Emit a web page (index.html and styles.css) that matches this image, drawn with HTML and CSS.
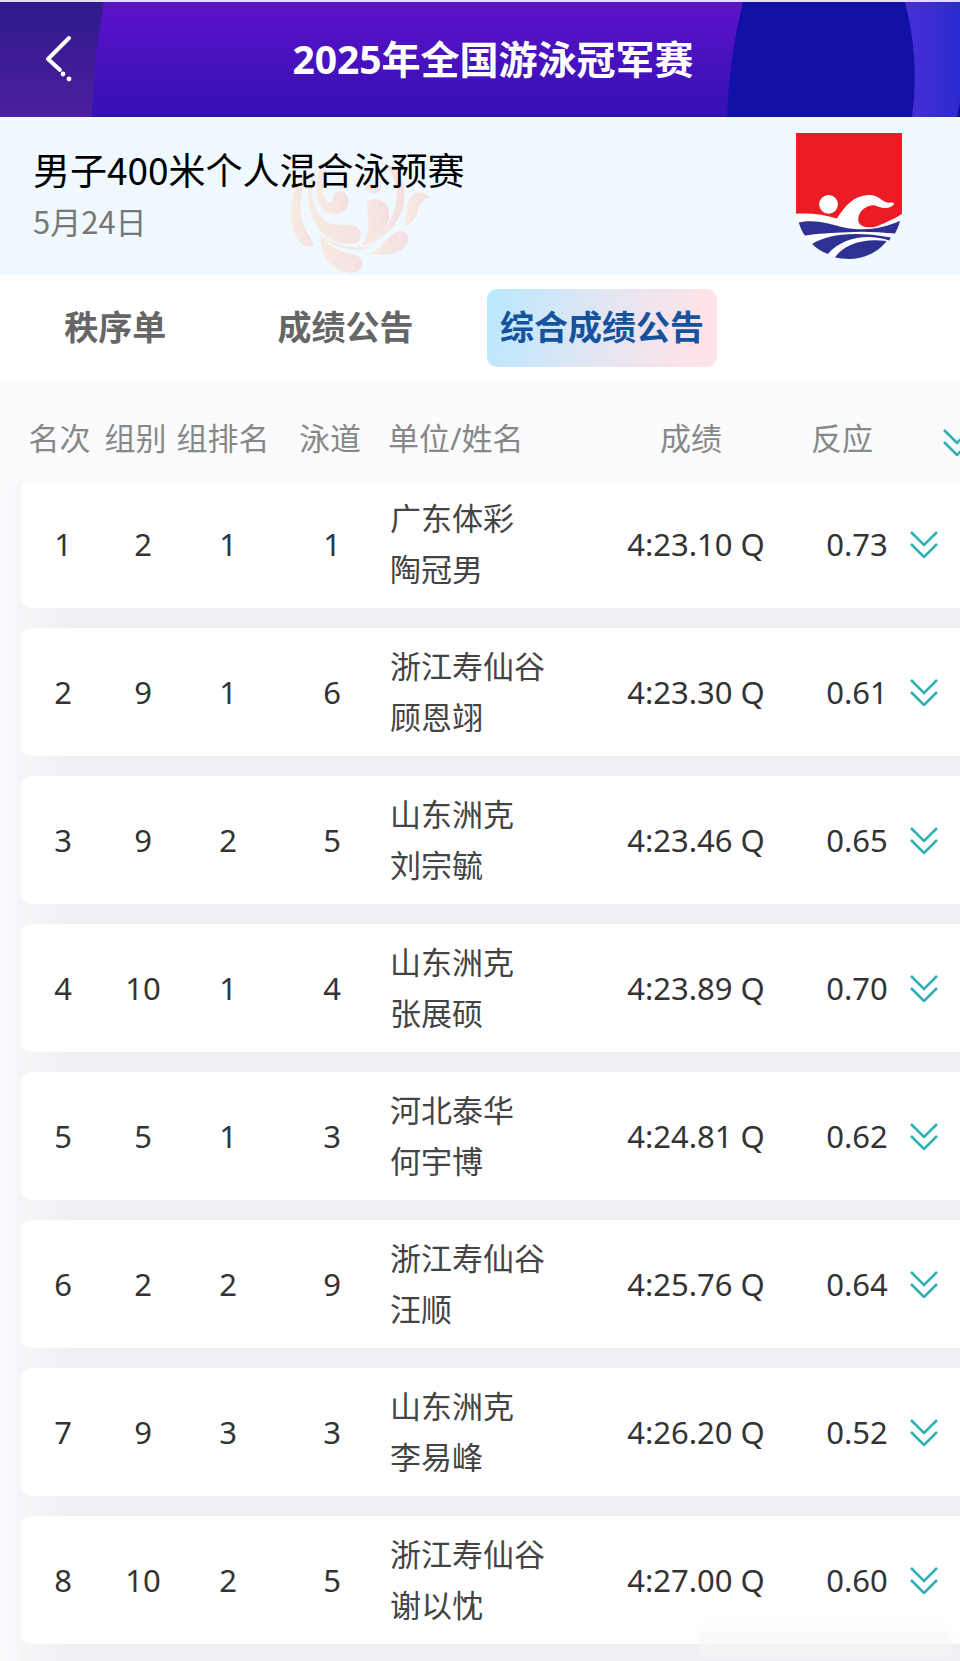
FILE: index.html
```html
<!DOCTYPE html>
<html lang="zh-CN">
<head>
  <meta charset="UTF-8">
  <meta name="viewport" content="width=device-width, initial-scale=1.0">
  <title>2025年全国游泳冠军赛</title>
  <link rel="stylesheet" href="styles.css">
</head>
<body>
<!-- 公用图标 -->
<svg class="sprite" aria-hidden="true">
  <symbol id="down" viewBox="0 0 28 28">
    <path d="M1 2l13 13L27 2M1 14l13 13 13-13" fill="none" stroke="#2fb0b5" stroke-width="2.6"/>
  </symbol>
</svg>

<header class="head">
  <svg class="headBg" viewBox="0 0 960 117" preserveAspectRatio="none" aria-hidden="true">
    <defs>
      <linearGradient id="main" x1="0" y1="0" x2="0" y2="1">
        <stop offset="0" stop-color="#5c12c8"/>
        <stop offset="1" stop-color="#3411b4"/>
      </linearGradient>
      <linearGradient id="left" x1="0" y1="0" x2="0" y2="1">
        <stop offset="0" stop-color="#2e1a8c"/>
        <stop offset="1" stop-color="#4c1ea0"/>
      </linearGradient>
      <linearGradient id="right" x1="0" y1="0" x2="1" y2="0">
        <stop offset="0" stop-color="#4a2fd6"/>
        <stop offset="1" stop-color="#2b2bd0"/>
      </linearGradient>
    </defs>
    <rect width="960" height="117" fill="url(#main)"/>
    <path d="M0 0H104Q93 58 92 117H0z" fill="url(#left)"/>
    <path d="M900 0H960V117H900z" fill="url(#right)"/>
    <path d="M743 0H905Q920 58 912 117H727Q729 58 743 0z" fill="#1111a8"/>
    <path d="M960 102V117H957z" fill="#10107a"/>
  </svg>
  <button class="back" type="button" aria-label="返回">
    <svg viewBox="0 0 28 48" aria-hidden="true">
      <path d="M24 3L3 24l12 11" fill="none" stroke="#fff" stroke-width="4" stroke-linecap="round" stroke-linejoin="round"/>
      <circle cx="18" cy="39" r="2.4" fill="#fff"/>
      <circle cx="24" cy="44" r="2.4" fill="#fff"/>
    </svg>
  </button>
  <h1>2025年全国游泳冠军赛</h1>
</header>

<section class="info">
  <svg class="flower" viewBox="50 40 440 365" aria-hidden="true">
    <defs>
      <linearGradient id="petal" x1="0" y1="0.600" x2="1" y2="0.400">
        <stop offset="0" stop-color="#f8ece2"/>
        <stop offset="1" stop-color="#f4dfe0"/>
      </linearGradient>
    </defs>
    <g fill="url(#petal)">
      <path d="M112 100C70 130 54 190 64 250C72 296 96 326 128 320C132 296 104 282 94 236C86 190 92 140 112 100z"/>
      <path d="M150 74C104 116 104 190 134 248C160 300 214 322 262 308C278 290 272 262 246 256C206 252 172 264 146 222C116 174 116 118 150 74z"/>
      <path d="M152 84C134 120 132 172 152 204C170 228 214 228 230 204C242 180 228 156 208 154C184 154 196 182 178 188C156 186 150 130 168 92z"/>
      <path d="M294 182C326 168 358 190 356 226C354 270 312 306 272 322C292 286 296 260 292 228C290 208 284 192 294 182z"/>
      <path d="M284 140C296 128 326 128 334 142C330 160 300 172 284 150z"/>
      <path d="M334 70C386 76 408 124 400 184C394 242 350 292 288 318C344 280 374 232 378 172C380 126 364 92 334 70z"/>
      <path d="M414 184C422 156 450 146 480 174C456 172 446 194 440 218C432 244 414 256 396 262C410 236 406 210 414 184z"/>
      <path d="M372 280C398 264 420 282 412 306C400 340 350 352 292 340C328 334 342 296 372 280z"/>
      <path d="M150 284C174 326 214 334 250 344C280 352 284 376 264 394C230 410 176 384 158 340C152 320 152 302 150 284z"/>
      <path d="M160 298C204 330 262 336 312 318C264 328 206 322 160 290z"/>
    </g>
  </svg>
  <div class="event">
    <h2>男子400米个人混合泳预赛</h2>
    <p>5月24日</p>
  </div>
  <svg class="logo" viewBox="50 40 316 376" role="img" aria-label="游泳协会">
    <path d="M50 280V40H366V284C350 350 280 416 208 416C140 416 64 360 50 280z" fill="#fff"/>
    <path d="M50 40H366V282C350 292 324 306 292 318C266 326 240 320 236 304C232 276 258 254 286 256C304 264 330 270 343 252C340 246 334 248 326 248C306 246 296 224 266 225C220 228 196 258 172 295C136 284 96 278 50 281z" fill="#ed1c24"/>
    <circle cx="147" cy="253" r="28" fill="#fff"/>
    <g fill="#2e3192">
      <path d="M58 307C108 296 150 312 190 321C250 334 310 326 360 302C356 320 350 332 345 340C300 336 250 332 204 336C156 338 112 340 76 346C68 334 62 320 58 307z"/>
      <path d="M98 371C140 344 220 330 333 352L328 361C270 340 190 348 145 401C126 394 110 384 98 371z"/>
      <path d="M166 411C190 376 244 352 320 362C296 396 250 416 208 416C192 416 178 414 166 411z"/>
    </g>
  </svg>
</section>

<nav class="tabs">
  <button type="button">秩序单</button>
  <button type="button">成绩公告</button>
  <button type="button" class="active" aria-current="page">综合成绩公告</button>
</nav>

<table class="list">
  <thead>
    <tr>
      <th>名次</th>
      <th>组别</th>
      <th>组排名</th>
      <th>泳道</th>
      <th class="name">单位/姓名</th>
      <th>成绩</th>
      <th>反应</th>
      <th class="more"><button type="button" aria-label="全部展开"><svg><use href="#down"/></svg></button></th>
    </tr>
  </thead>
  <tbody>
    <tr>
      <td>1</td>
      <td>2</td>
      <td>1</td>
      <td>1</td>
      <td class="name">广东体彩<br>陶冠男</td>
      <td>4:23.10 Q</td>
      <td>0.73</td>
      <td class="more"><button type="button" aria-label="展开"><svg><use href="#down"/></svg></button></td>
    </tr>
    <tr>
      <td>2</td>
      <td>9</td>
      <td>1</td>
      <td>6</td>
      <td class="name">浙江寿仙谷<br>顾恩翊</td>
      <td>4:23.30 Q</td>
      <td>0.61</td>
      <td class="more"><button type="button" aria-label="展开"><svg><use href="#down"/></svg></button></td>
    </tr>
    <tr>
      <td>3</td>
      <td>9</td>
      <td>2</td>
      <td>5</td>
      <td class="name">山东洲克<br>刘宗毓</td>
      <td>4:23.46 Q</td>
      <td>0.65</td>
      <td class="more"><button type="button" aria-label="展开"><svg><use href="#down"/></svg></button></td>
    </tr>
    <tr>
      <td>4</td>
      <td>10</td>
      <td>1</td>
      <td>4</td>
      <td class="name">山东洲克<br>张展硕</td>
      <td>4:23.89 Q</td>
      <td>0.70</td>
      <td class="more"><button type="button" aria-label="展开"><svg><use href="#down"/></svg></button></td>
    </tr>
    <tr>
      <td>5</td>
      <td>5</td>
      <td>1</td>
      <td>3</td>
      <td class="name">河北泰华<br>何宇博</td>
      <td>4:24.81 Q</td>
      <td>0.62</td>
      <td class="more"><button type="button" aria-label="展开"><svg><use href="#down"/></svg></button></td>
    </tr>
    <tr>
      <td>6</td>
      <td>2</td>
      <td>2</td>
      <td>9</td>
      <td class="name">浙江寿仙谷<br>汪顺</td>
      <td>4:25.76 Q</td>
      <td>0.64</td>
      <td class="more"><button type="button" aria-label="展开"><svg><use href="#down"/></svg></button></td>
    </tr>
    <tr>
      <td>7</td>
      <td>9</td>
      <td>3</td>
      <td>3</td>
      <td class="name">山东洲克<br>李易峰</td>
      <td>4:26.20 Q</td>
      <td>0.52</td>
      <td class="more"><button type="button" aria-label="展开"><svg><use href="#down"/></svg></button></td>
    </tr>
    <tr>
      <td>8</td>
      <td>10</td>
      <td>2</td>
      <td>5</td>
      <td class="name">浙江寿仙谷<br>谢以忱</td>
      <td>4:27.00 Q</td>
      <td>0.60</td>
      <td class="more"><button type="button" aria-label="展开"><svg><use href="#down"/></svg></button></td>
    </tr>
  </tbody>
</table>
<div class="fade"></div>
</body>
</html>
```
FILE: styles.css
```css
*{
  margin: 0;
  padding: 0;
  box-sizing: border-box;
}
body{
  position: relative;
  overflow-x: hidden;
  background-color: #fafbfd;
  font-family: "Noto Sans", "Noto Sans CJK SC", sans-serif;
  font-size: 31px;
}
button{
  border: 0;
  background: none;
  font: inherit;
  color: inherit;
  cursor: pointer;
}
svg{
  display: block;
}
.sprite{
  position: absolute;
  width: 0;
  height: 0;
}
/*顶部标题*/
.head{
  position: relative;
  display: grid;
  grid-template-columns: 106px 1fr 80px;
  align-items: center;
  height: 117px;
  padding-bottom: 2px;
  border-top: 2px solid #e4dcf0;
  color: #fff;
}
.headBg{
  position: absolute;
  width: 100%;
  height: 100%;
}
.back{
  position: relative;
  justify-self: center;
  padding: 0 0 0 12px;
}
.back svg{
  width: 28px;
  height: 48px;
}
.head h1{
  position: relative;
  font-size: 39px;
  line-height: 60px;
  text-align: center;
}
/*比赛信息*/
.info{
  position: relative;
  display: flex;
  justify-content: space-between;
  align-items: flex-start;
  height: 158px;
  padding: 16px 58px 0 33px;
  background-color: #f0f9ff;
}
.flower{
  position: absolute;
  left: 287px;
  top: 36px;
  width: 147px;
  height: 122px;
}
.event{
  position: relative;
  padding-top: 8px;
  font-family: "Noto Sans CJK SC", sans-serif;
}
.event h2{
  font-size: 37px;
  font-weight: 400;
  line-height: 56px;
  color: #000;
}
.event p{
  font-size: 31px;
  line-height: 48px;
  color: #777;
}
.logo{
  width: 106px;
  height: 126px;
}
/*选项卡*/
.tabs{
  display: grid;
  grid-template-columns: 24% 24% 29.4%;
  align-items: center;
  justify-items: center;
  height: 105px;
  background-color: #fff;
}
.tabs button{
  height: 78px;
  padding: 0 13px 4px;
  border-radius: 10px;
  font-size: 34px;
  font-weight: 700;
  white-space: nowrap;
  color: #666;
}
.tabs .active{
  background-image: linear-gradient(100deg, #b9e8ff, #e3e6f2 50%, #ffe3e9 90%);
  color: #15539c;
}
/*成绩列表*/
.list{
  display: block;
}
.list thead{
  position: relative;
  z-index: 1;
  display: block;
  background-color: #fafbfd;
}
.list tr{
  display: grid;
  align-items: center;
  overflow: hidden;
}
.list thead tr{
  grid-template-columns: 77fr 75fr 100fr 114fr 193fr 222fr 80fr 78fr;
  height: 104px;
  padding: 12px 0 0 21px;
}
.list tbody{
  display: grid;
  gap: 20px;
  margin: -4px 0 0 21px;
  padding-bottom: 17px;
  background-image: linear-gradient(90deg, #f5f6f8, #eff0f3 50px);
  box-shadow: 0 0 18px #eff0f3;
}
.list tbody tr{
  grid-template-columns: 84fr 76fr 94fr 114fr 187fr 240fr 82fr 62fr;
  height: 128px;
  border-radius: 10px 0 0 10px;
  background-color: #fff;
}
.list th,
.list td{
  min-width: 0;
  line-height: 51px;
  text-align: center;
  white-space: nowrap;
}
.list th{
  font-weight: 400;
  color: #888;
}
.list td{
  color: #333;
}
.list .name{
  padding-left: 1px;
  text-align: left;
}
.list td.name{
  color: #444;
}
.list .more{
  padding-left: 12px;
}
.list th.more{
  padding: 8px 0 0 61px;
}
.more button{
  display: block;
}
.more svg{
  width: 28px;
  height: 28px;
}
/*底部渐隐*/
.fade{
  position: absolute;
  right: 8px;
  bottom: 6px;
  width: 254px;
  height: 36px;
  background-image: linear-gradient(rgba(245, 245, 246, 0), #f4f5f5);
  filter: blur(3px);
}
```
